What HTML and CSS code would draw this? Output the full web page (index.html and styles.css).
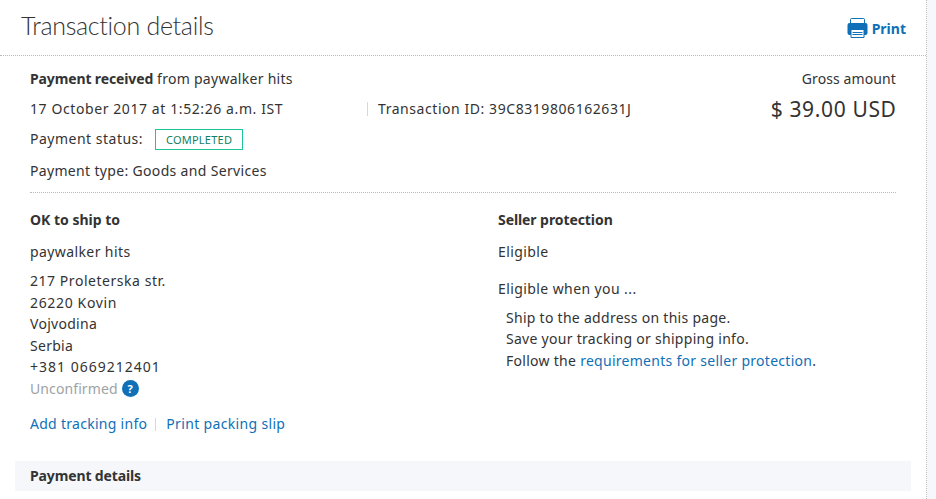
FILE: index.html
```
<!DOCTYPE html>
<html lang="en">
<head>
<meta charset="utf-8">
<title>Transaction details</title>
<link rel="stylesheet" href="styles.css">
</head>
<body>
<main class="page">
  <header class="header">
    <h1 class="title">Transaction details</h1>
    <a class="print">
      <svg class="print-icon" width="21" height="20" viewBox="0 0 21 20" fill="none">
        <path d="M3.5 5V1.5Q3.5 .5 4.5 .5H16.5Q17.5 .5 17.5 1.5V5" fill="#fff" stroke="#0f70b7"/>
        <path d="M2.5 5H18.5Q20.5 5 20.5 7V15Q20.5 17 18.5 17H17.5V19Q17.5 20 16.500 20H4.500Q3.500 20 3.500 19V17H2.500Q.5 17 .5 15V7Q.5 5 2.500 5Z" fill="#0f70b7"/>
        <path d="M4.500 12H16.500V19H4.500Z" fill="#fff"/>
        <path d="M5.500 14.500H15.500M5.500 16.500H15.500" stroke="#0f70b7"/>
      </svg>
      <span class="print-label">Print</span>
    </a>
  </header>
  <section class="summary">
    <div class="summary-main">
      <p class="row"><span><b class="strong">Payment received</b> from paywalker hits</span></p>
      <p class="row"><span class="date">17 October 2017 at 1:52:26 a.m. IST</span><span class="txn">Transaction ID: 39C8319806162631J</span></p>
      <p class="row"><span class="status">Payment status:</span><span class="badge">COMPLETED</span></p>
      <p class="row type">Payment type: Goods and Services</p>
    </div>
    <div class="gross">
      <p class="row gross-label">Gross amount</p>
      <p class="amount">$ 39.00 USD</p>
    </div>
  </section>
  <section class="columns">
    <div class="shipping">
      <h2 class="heading ship-heading">OK to ship to</h2>
      <p class="name">paywalker hits</p>
      <address class="lines">
        <span class="street">217 Proleterska str.</span><br>
        <span class="city">26220 Kovin</span><br>
        Vojvodina<br>
        Serbia<br>
        <span class="phone">+381 0669212401</span><br>
        <span class="unconfirmed">Unconfirmed</span><span class="help">?</span>
      </address>
      <p class="actions"><a class="link">Add tracking info</a><i class="bar"></i><a class="link slip">Print packing slip</a></p>
    </div>
    <div class="protection">
      <h2 class="heading">Seller protection</h2>
      <p class="name">Eligible</p>
      <p class="when">Eligible when you ...</p>
      <p class="lines rules">
        Ship to the address on this page.<br>
        Save your tracking or shipping info.<br>
        Follow the <a class="link">requirements for seller protection</a>.
      </p>
    </div>
  </section>
  <h2 class="details">Payment details</h2>
</main>
</body>
</html>
```
FILE: styles.css
```
* { box-sizing: border-box; }
body {
  margin: 0;
  height: 499px;
  overflow: hidden;
  background: #f5f7fa;
  color: #333;
  font: 14px/22px "Noto Sans", sans-serif;
  letter-spacing: .28px;
}
h1, h2, p { margin: 0; }
.page {
  width: 927px;
  height: 499px;
  background: #fff;
  border-right: 1px dotted #bbb;
}
.header {
  height: 56px;
  padding: 0 20px 0 21px;
  display: flex;
  justify-content: space-between;
  border-bottom: 1px dotted #bbb;
}
.title {
  font-family: Lato, "Noto Sans", sans-serif;
  font-size: 25px;
  line-height: 50px;
  font-weight: 300;
  font-variant-ligatures: none;
  letter-spacing: -.3px;
}
.print { display: flex; align-items: center; gap: 4px; color: #0f70b7; font-weight: 700; letter-spacing: 0; }
.print-label { padding-top: 2px; }
.summary {
  height: 137px;
  margin: 0 30px;
  padding-top: 8px;
  display: flex;
  justify-content: space-between;
  border-bottom: 1px dotted #bbb;
}
.row { height: 30px; line-height: 30px; display: flex; align-items: center; white-space: nowrap; }
.strong { letter-spacing: -.13px; }
.type { margin-top: 2px; letter-spacing: .33px; }
.date { width: 337px; letter-spacing: .59px; }
.txn { line-height: 14px; padding-left: 10px; border-left: 1px solid #cfdbe2; letter-spacing: .56px; }
.status { letter-spacing: .5px; }
.badge {
  height: 21px;
  width: 88px;
  margin-left: 12px;
  border: 1px solid #1fc39a;
  color: #107f62;
  font-size: 11px;
  line-height: 20px;
  text-align: center;
  letter-spacing: .24px;
}
.gross { display: flex; flex-direction: column; align-items: flex-end; }
.gross-label { letter-spacing: .1px; }
.amount { font-size: 21px; line-height: 30px; letter-spacing: .65px; margin-right: -.6px; }
.columns { display: flex; margin: 0 30px; height: 268px; padding-top: 16px; }
.shipping { width: 468px; }
.heading { font-size: 14px; line-height: 22px; letter-spacing: -.08px; }
.ship-heading { letter-spacing: 0; }
.name { margin-top: 10px; letter-spacing: .4px; }
.lines { font-style: normal; line-height: 21.5px; margin-top: 7px; }
.street { letter-spacing: .54px; }
.city { letter-spacing: .65px; }
.phone { letter-spacing: 1px; }
.when { margin-top: 15px; letter-spacing: .41px; }
.rules { padding-left: 8px; margin-top: 6.7px; }
.unconfirmed { color: #9da3a6; letter-spacing: .1px; }
.help {
  display: inline-block;
  width: 17px;
  height: 17px;
  margin: -2px 0 -2px 4px;
  border-radius: 50%;
  background: #0f70b7;
  color: #fff;
  font-size: 11px;
  font-weight: 700;
  line-height: 17px;
  text-align: center;
  letter-spacing: 0;
  vertical-align: 1px;
}
.actions { display: flex; align-items: center; margin-top: 14px; }
.link { color: #0f70b7; }
.slip { letter-spacing: .34px; }
.bar { width: 1px; height: 13px; margin: 0 10px 0 8px; background: #cfdbe2; }
.details {
  height: 30px;
  margin: 0 15px;
  padding-left: 15px;
  background: #f5f7fa;
  font-size: 14px;
  line-height: 30px;
  letter-spacing: -.13px;
}
```
